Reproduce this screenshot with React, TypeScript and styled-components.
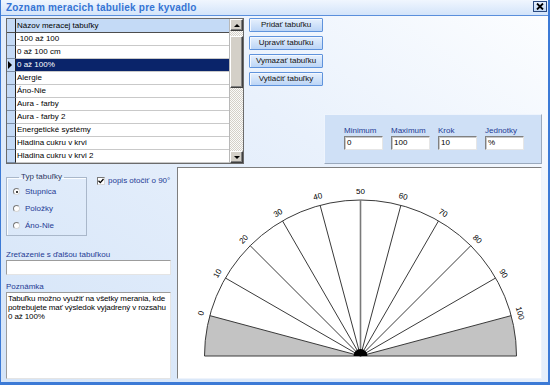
import React from "react";
import styled, { createGlobalStyle } from "styled-components";

const FONT = `"Liberation Sans", Arial, sans-serif`;
const NAVY = "#1f3b94";

const GlobalStyle = createGlobalStyle`
  html, body { margin: 0; padding: 0; }
  body { width: 550px; height: 385px; overflow: hidden; font-family: ${FONT}; }
  * { box-sizing: border-box; }
`;

const Window = styled.div`
  width: 550px;
  height: 385px;
  display: flex;
  flex-direction: column;
  border-left: 1px solid #3c7ad6;
  border-right: 2px solid #3c7ad6;
  border-bottom: 3px solid #3c7ad6;
  background: linear-gradient(to bottom left, #fdfeff 0%, #e9f1fc 40%, #d4e4f8 100%);
  font-family: ${FONT};
  font-size: 8px;
  color: #000;
`;

const TitleBar = styled.div`
  height: 16px;
  flex: none;
  display: flex;
  align-items: center;
  justify-content: space-between;
  padding: 0 1px 0 5px;
  background: linear-gradient(to bottom, #f0f6fe, #d3e4fa);
  border-bottom: 1px solid #5a8fdc;
`;

const Title = styled.div`
  font-size: 10px;
  font-weight: bold;
  letter-spacing: 0.2px;
  color: #3574d4;
  line-height: 12px;
`;

const CloseButton = styled.div`
  width: 14px;
  height: 11px;
  margin-top: -2px;
  display: flex;
  align-items: center;
  justify-content: center;
  border: 1px solid #2a4a80;
  background: linear-gradient(to bottom, #e6f0fd, #c4daf6);
`;

const Body = styled.div`
  flex: 1;
  display: flex;
  flex-direction: column;
  padding: 2px 6px 0 5px;
`;

const TopSection = styled.div`
  display: flex;
  gap: 4px;
  height: 146px;
`;

const GridFrame = styled.div`
  width: 238px;
  height: 146px;
  display: flex;
  border: 1px solid #6b6b6b;
  background: #fff;
`;

const GridBody = styled.div`
  flex: 1;
  display: flex;
  flex-direction: column;
`;

const GridRow = styled.div<{ $header?: boolean }>`
  display: grid;
  grid-template-columns: 9px 1fr;
  height: ${(p) => (p.$header ? 14 : 13)}px;
`;

const SelectorCell = styled.div<{ $header?: boolean }>`
  background: #c4daf6;
  border-right: 1px solid #222;
  border-bottom: 1px solid ${(p) => (p.$header ? "#4d4d4d" : "#7c8ea6")};
  display: flex;
  align-items: center;
  padding-left: 1px;
`;

const Pointer = styled.span`
  width: 0;
  height: 0;
  border-top: 4px solid transparent;
  border-bottom: 4px solid transparent;
  border-left: 4px solid #000;
`;

const DataCell = styled.div<{ $header?: boolean; $selected?: boolean }>`
  background: ${(p) => (p.$header ? "#c4daf6" : p.$selected ? "#0a246a" : "#fff")};
  color: ${(p) => (p.$selected ? "#fff" : "#000")};
  border-bottom: 1px solid ${(p) => (p.$header ? "#4d4d4d" : "#c9c9c9")};
  padding-left: 1px;
  line-height: ${(p) => (p.$header ? 13 : 12)}px;
  white-space: nowrap;
  overflow: hidden;
`;

const ScrollBar = styled.div`
  width: 14px;
  display: flex;
  flex-direction: column;
  border-left: 1px solid #b8b8b8;
  background: repeating-conic-gradient(#d4d0c8 0% 25%, #fbfbfa 0% 50%) 0 0 / 2px 2px;
`;

const ScrollButton = styled.div`
  height: 12px;
  flex: none;
  display: flex;
  align-items: center;
  justify-content: center;
  background: #d4d0c8;
  border: 1px solid;
  border-color: #fff #404040 #404040 #fff;
  box-shadow: inset -1px -1px #808080;
`;

const Arrow = styled.span<{ $down?: boolean }>`
  width: 0;
  height: 0;
  border-left: 3px solid transparent;
  border-right: 3px solid transparent;
  ${(p) => (p.$down ? "border-top: 3px solid #000;" : "border-bottom: 3px solid #000;")}
`;

const Track = styled.div`
  flex: 1;
  padding-top: 5px;
`;

const Thumb = styled.div`
  height: 52px;
  background: #d4d0c8;
  border: 1px solid;
  border-color: #fff #404040 #404040 #fff;
  box-shadow: inset -1px -1px #808080;
`;

const TopRight = styled.div`
  flex: 1;
  display: flex;
  flex-direction: column;
  justify-content: space-between;
  padding-left: 1px;
`;

const ButtonColumn = styled.div`
  display: flex;
  flex-direction: column;
  gap: 4px;
`;

const ActionButton = styled.button`
  width: 74px;
  height: 14px;
  padding: 0;
  border: 1px solid #5f93dc;
  border-radius: 1px;
  background: linear-gradient(to bottom, #e6f0fd, #bcd5f6);
  box-shadow: inset 1px 1px 0 #f4f8fe;
  font-family: ${FONT};
  font-size: 8px;
  color: #111;
  line-height: 12px;
`;

const ParamsPanel = styled.div`
  align-self: flex-end;
  width: 218px;
  height: 50px;
  display: flex;
  gap: 8px;
  padding: 11px 0 0 19px;
  background: #cfe0f6;
  border: 1px solid;
  border-color: #eef4fd #9aa9bd #9aa9bd #eef4fd;
`;

const Field = styled.div`
  display: flex;
  flex-direction: column;
  gap: 1px;
`;

const FieldLabel = styled.div`
  color: ${NAVY};
  line-height: 9px;
  height: 9px;
`;

const SmallInput = styled.div`
  width: 39px;
  height: 14px;
  background: #fff;
  border: 1px solid;
  border-color: #808080 #e6e6e6 #e6e6e6 #808080;
  box-shadow: inset 1px 1px #c8c8c8;
  padding-left: 2px;
  line-height: 12px;
`;

const BottomSection = styled.div`
  display: flex;
  gap: 6px;
  margin-top: 3px;
  height: 212px;
`;

const LeftColumn = styled.div`
  width: 165px;
  display: flex;
  flex-direction: column;
`;

const TopRow = styled.div`
  display: flex;
  align-items: flex-start;
  margin-top: 6px;
`;

const GroupBox = styled.fieldset`
  width: 81px;
  height: 63px;
  margin: 0;
  padding: 0 0 0 6px;
  min-inline-size: 0;
  border: 1px solid #a9b7ca;
  box-shadow: inset 1px 1px 0 #fbfdff;
`;

const Legend = styled.legend`
  font-size: 8px;
  line-height: 8px;
  margin-left: 6px;
  padding: 0 2px;
  color: #2a3560;
`;

const RadioList = styled.div`
  display: flex;
  flex-direction: column;
  gap: 8px;
  padding-top: 6px;
`;

const RadioRow = styled.div`
  display: flex;
  align-items: center;
  gap: 5px;
  height: 9px;
  color: ${NAVY};
`;

const RadioDot = styled.span<{ $on?: boolean }>`
  position: relative;
  width: 7px;
  height: 7px;
  border-radius: 50%;
  background: #fff;
  border: 1px solid;
  border-color: #7a7a7a #d8d8d8 #d8d8d8 #7a7a7a;
  &::after {
    content: "";
    display: ${(p) => (p.$on ? "block" : "none")};
    position: absolute;
    left: 1.5px;
    top: 1.5px;
    width: 2px;
    height: 2px;
    border-radius: 50%;
    background: #000;
  }
`;

const CheckRow = styled.div`
  display: flex;
  align-items: center;
  gap: 3px;
  margin: 4px 0 0 10px;
  color: ${NAVY};
  white-space: nowrap;
  line-height: 8px;
`;

const CheckBox = styled.span`
  width: 8px;
  height: 8px;
  display: flex;
  align-items: center;
  justify-content: center;
  background: #fff;
  border: 1px solid;
  border-color: #7a7a7a #d8d8d8 #d8d8d8 #7a7a7a;
`;

const Label = styled.div<{ $gap: number }>`
  margin-top: ${(p) => p.$gap}px;
  height: 9px;
  line-height: 9px;
  color: ${NAVY};
`;

const TextBox = styled.div`
  margin-top: 1px;
  height: 15px;
  background: #fff;
  border: 1px solid;
  border-color: #9c9c9c #e4e4e4 #e4e4e4 #9c9c9c;
`;

const NoteArea = styled.textarea`
  margin-top: 1px;
  flex: 1;
  resize: none;
  overflow: hidden;
  background: #fff;
  border: 1px solid;
  border-color: #9c9c9c #e4e4e4 #e4e4e4 #9c9c9c;
  font-family: ${FONT};
  font-size: 8px;
  letter-spacing: -0.12px;
  line-height: 9px;
  padding: 1px 0 0 1px;
  color: #000;
  outline: none;
`;

const ChartPanel = styled.div`
  flex: 1;
  background: #fff;
  border: 1px solid;
  border-color: #7e7e7e #eef3fb #eef3fb #7e7e7e;
`;

const rows = [
  "-100 až 100",
  "0 až 100 cm",
  "0 až 100%",
  "Alergie",
  "Áno-Nie",
  "Aura - farby",
  "Aura - farby 2",
  "Energetické systémy",
  "Hladina cukru v krvi",
  "Hladina cukru v krvi 2",
];
const SELECTED = 2;

const buttons = ["Pridať tabuľku", "Upraviť tabuľku", "Vymazať tabuľku", "Vytlačiť tabuľky"];

const params = [
  { label: "Minimum", value: "0" },
  { label: "Maximum", value: "100" },
  { label: "Krok", value: "10" },
  { label: "Jednotky", value: "%" },
];

const radios = [
  { label: "Stupnica", on: true },
  { label: "Položky", on: false },
  { label: "Áno-Nie", on: false },
];

const CX = 182.5;
const CY = 188;
const R = 156;

function pt(deg: number, r: number): [number, number] {
  const a = (deg * Math.PI) / 180;
  return [CX - r * Math.cos(a), CY - r * Math.sin(a)];
}

function Dial() {
  const ticks = Array.from({ length: 11 }, (_, i) => i * 10);
  const [l15x, l15y] = pt(15, R);
  const [r15x, r15y] = pt(165, R);
  return (
    <svg width="363" height="210" viewBox="0 0 363 210">
      <path
        d={`M${CX},${CY} L${CX - R},${CY} A${R} ${R} 0 0 1 ${l15x},${l15y} Z`}
        fill="#c3c3c3"
      />
      <path
        d={`M${CX},${CY} L${r15x},${r15y} A${R} ${R} 0 0 1 ${CX + R},${CY} Z`}
        fill="#c3c3c3"
      />
      <path
        d={`M${CX - R},${CY} A${R} ${R} 0 0 1 ${CX + R},${CY}`}
        fill="none"
        stroke="#3a3a3a"
        strokeWidth="1"
      />
      <line x1={CX - R} y1={CY} x2={CX + R} y2={CY} stroke="#3a3a3a" strokeWidth="1" />
      {ticks.map((v) => {
        const th = 15 + 1.5 * v;
        const [x, y] = pt(th, R);
        const [lx, ly] = pt(th, 165);
        return (
          <g key={v}>
            <line
              x1={CX}
              y1={CY}
              x2={x}
              y2={y}
              stroke={v === 50 ? "#7a7a7a" : "#3a3a3a"}
              strokeWidth={v === 50 ? 1.6 : 1}
            />
            <text
              x={lx}
              y={ly}
              fontSize="8"
              fontFamily={FONT}
              textAnchor="middle"
              dominantBaseline="central"
              transform={`rotate(${th - 90} ${lx} ${ly})`}
            >
              {v}
            </text>
          </g>
        );
      })}
      <path d={`M${CX - 7},${CY} A7 7 0 0 1 ${CX + 7},${CY} Z`} fill="#000" />
    </svg>
  );
}

export default function App() {
  return (
    <>
      <GlobalStyle />
      <Window>
        <TitleBar>
          <Title>Zoznam meracich tabuliek pre kyvadlo</Title>
          <CloseButton>
            <svg width="8" height="7" viewBox="0 0 8 7">
              <path d="M1 0.5 L7 6.5 M7 0.5 L1 6.5" stroke="#000" strokeWidth="1.8" />
            </svg>
          </CloseButton>
        </TitleBar>
        <Body>
          <TopSection>
            <GridFrame>
              <GridBody>
                <GridRow $header>
                  <SelectorCell $header />
                  <DataCell $header>Názov meracej tabuľky</DataCell>
                </GridRow>
                {rows.map((r, i) => (
                  <GridRow key={r}>
                    <SelectorCell>{i === SELECTED && <Pointer />}</SelectorCell>
                    <DataCell $selected={i === SELECTED}>{r}</DataCell>
                  </GridRow>
                ))}
              </GridBody>
              <ScrollBar>
                <ScrollButton>
                  <Arrow />
                </ScrollButton>
                <Track>
                  <Thumb />
                </Track>
                <ScrollButton>
                  <Arrow $down />
                </ScrollButton>
              </ScrollBar>
            </GridFrame>
            <TopRight>
              <ButtonColumn>
                {buttons.map((b) => (
                  <ActionButton key={b}>{b}</ActionButton>
                ))}
              </ButtonColumn>
              <ParamsPanel>
                {params.map((p) => (
                  <Field key={p.label}>
                    <FieldLabel>{p.label}</FieldLabel>
                    <SmallInput>{p.value}</SmallInput>
                  </Field>
                ))}
              </ParamsPanel>
            </TopRight>
          </TopSection>
          <BottomSection>
            <LeftColumn>
              <TopRow>
                <GroupBox>
                  <Legend>Typ tabuľky</Legend>
                  <RadioList>
                    {radios.map((r) => (
                      <RadioRow key={r.label}>
                        <RadioDot $on={r.on} />
                        {r.label}
                      </RadioRow>
                    ))}
                  </RadioList>
                </GroupBox>
                <CheckRow>
                  <CheckBox>
                    <svg width="6" height="6" viewBox="0 0 6 6">
                      <path d="M0.5 2.8 L2.3 4.6 L5.5 1" stroke="#000" strokeWidth="1.3" fill="none" />
                    </svg>
                  </CheckBox>
                  popis otočiť o 90°
                </CheckRow>
              </TopRow>
              <Label $gap={14}>Zreťazenie s ďalšou tabuľkou</Label>
              <TextBox />
              <Label $gap={7}>Poznámka</Label>
              <NoteArea
                readOnly
                wrap="off"
                value={"Tabuľku možno využiť na všetky merania, kde\npotrebujete mať výsledok vyjadrený v rozsahu\n0 až 100%"}
              />
            </LeftColumn>
            <ChartPanel>
              <Dial />
            </ChartPanel>
          </BottomSection>
        </Body>
      </Window>
    </>
  );
}
